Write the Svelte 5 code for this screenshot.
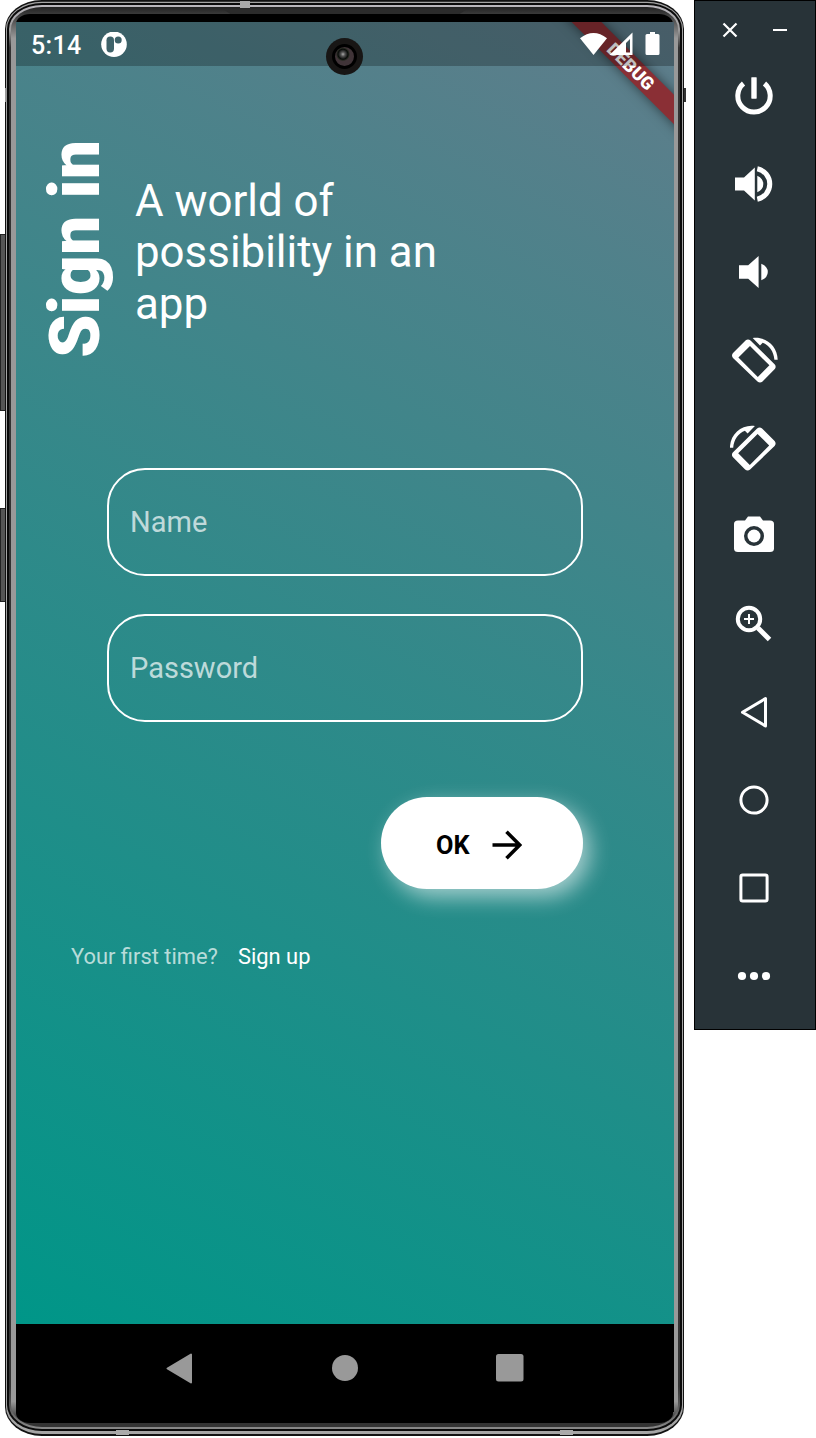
<script>
  const rail = ['power', 'volume-up', 'volume-down', 'rotate-left', 'rotate-right', 'camera', 'zoom', 'back', 'home', 'overview', 'more'];
  const fields = ['Name', 'Password'];
</script>

<main>
  <section class="device">
    <i class="key k1"></i><i class="key k2"></i>
    <svg class="bezel" width="679" height="1436" viewBox="0 0 679 1436">
      <defs>
        <linearGradient id="rim" x1="0" y1="0" x2="0" y2="1"><stop offset="0" stop-color="#bbb8be" /><stop offset=".018" stop-color="#999" /><stop offset=".03" stop-color="#333" /><stop offset=".97" stop-color="#333" /><stop offset="1" stop-color="#888" /></linearGradient>
        <linearGradient id="side" x1="0" y1="0" x2="0" y2="1"><stop offset="0" stop-color="#222" /><stop offset=".007" stop-color="#444" /><stop offset=".022" stop-color="#999" /><stop offset=".982" stop-color="#999" /><stop offset=".995" stop-color="#333" /></linearGradient>
      </defs>
      <rect width="679" height="1436" rx="37" ry="29" fill="#111" />
      <rect x="1" y="1.8" width="677" height="1432.2" rx="36" ry="27" fill="#a5a5a5" />
      <rect x="2" y="3" width="675" height="1428" rx="35" ry="26" fill="#0a0a0a" />
      <rect x="4" y="5" width="671" height="1424" rx="33" ry="24" fill="url(#rim)" />
      <rect x="6" y="7" width="667" height="1420" rx="31" ry="22" fill="url(#side)" />
      <rect x="11" y="14" width="657" height="1409" rx="14" ry="10" fill="#000" />
    </svg>
    <i class="band t1"></i><i class="band b1"></i><i class="band b2"></i>
    <i class="tick left"></i><i class="tick right"></i>
    <i class="speaker"></i>
    <div class="screen">
      <div class="app">
        <div class="corner"><div class="ribbon">DEBUG</div></div>
        <header class="status">
          <span class="clock">5:14</span>
          <svg class="badge" width="26" height="26" viewBox="0 0 26 26">
            <circle cx="13" cy="12.3" r="12.8" fill="#fff" />
            <rect x="5.5" y="4.5" width="7.5" height="16" rx="3.7" fill="#3e6269" />
            <circle cx="17.2" cy="8" r="3.5" fill="#3e6269" />
          </svg>
          <svg class="signals" width="80" height="26" viewBox="0 0 80 26">
            <path d="M0 6.2Q13.5-4.2 27 6.2L13.5 23Z" fill="#fff" />
            <path fill-rule="evenodd" d="M52.5.5V23H29.5ZM50 7L46 11V20.5H50Z" fill="#fff" />
            <path d="M67 2H70V0H75V2H78Q79.5 2 79.5 3.5V21.5Q79.5 23 78 23H67Q65.5 23 65.5 21.5V3.5Q65.5 2 67 2Z" fill="#fff" />
          </svg>
        </header>
        <div class="lens"><i></i></div>
        <div class="hero">
          <h1>Sign in</h1>
          <p>A world of possibility in an app</p>
        </div>
        <form>
          {#each fields as field}
            <div class="field">{field}</div>
          {/each}
          <button type="button">
            <span>OK</span>
            <svg width="30" height="30" viewBox="0 0 30 30"><path d="M.5 15H27M14.5 1.8L27.7 15L14.5 28.2" fill="none" stroke="#000" stroke-width="3.6" /></svg>
          </button>
        </form>
        <footer><span>Your first time?</span><b>Sign up</b></footer>
      </div>
      <nav>
        <svg width="27" height="31" viewBox="0 0 27 31"><path d="M1.5 15.5L25 1.5V29.5Z" fill="#999" stroke="#999" stroke-width="2" stroke-linejoin="round" /></svg>
        <svg width="26" height="26" viewBox="0 0 26 26"><circle cx="13" cy="13" r="13" fill="#999" /></svg>
        <svg width="28" height="28" viewBox="0 0 28 28"><rect width="27.5" height="27.5" rx="2.5" fill="#999" /></svg>
      </nav>
    </div>
  </section>

  <aside>
    <div class="window">
      <svg width="16" height="16" viewBox="0 0 16 16"><path d="M1.5 1.5L14.5 14.5M14.5 1.5L1.5 14.5" stroke="#fff" stroke-width="2.2" /></svg>
      <svg width="14" height="16" viewBox="0 0 14 16"><path d="M0 8H14" stroke="#fff" stroke-width="2" /></svg>
    </div>
    {#each rail as name}
      <div class="tool">
        <svg width="48" height="48" viewBox="-24 -24 48 48" fill="#fff">
          {#if name === 'power'}
            <rect x="-2.7" y="-18.8" width="5.4" height="21.5" rx=".6" />
            <path d="M-10.5-12.5A16.2 16.2 0 1 0 10.5-12.5" fill="none" stroke="#fff" stroke-width="5" />
          {:else if name === 'volume-up'}
            <path d="M-19-6.5H-10L.8-16.5V16.5L-10 6.5H-19ZM3.3-8.3Q9.3-5.5 9.3 0T3.3 8.3Z" />
            <path d="M3.3-15.2A15.5 15.5 0 0 1 3.3 15.2" fill="none" stroke="#fff" stroke-width="5" />
          {:else if name === 'volume-down'}
            <path d="M-15-6.8H-5.8L4.6-16V16L-5.8 6.8H-15ZM7.3-8.3Q13.8-5.5 13.8 0T7.3 8.3Z" />
          {:else if name === 'rotate-left' || name === 'rotate-right'}
            <g transform={name === 'rotate-right' ? 'translate(-.4 .5) scale(-1 1)' : 'translate(0 .5)'}>
              <path fill-rule="evenodd" d="M-8.5-20Q-6-21.8-3.5-20L20.8 4Q22.5 6 20.8 8.5L8.5 21Q6 23 3.5 21L-21-2.5Q-23-5-21-7.5ZM-4-14.6L-15.6-3L3.8 16.4L15.4 4.8Z" />
              <path d="M-1.3-22.5C12-24.3 23.4-14.5 23.7-.8H20.4C19.8-9 15-15.6 8.7-17.8L6-15Z" />
            </g>
          {:else if name === 'camera'}
            <path fill-rule="evenodd" d="M-16-15.5H-9L-6-19.5H6L9-15.5H16Q20-15.5 20-12V12.5Q20 16 16 16H-16Q-20 16-20 12.5V-12Q-20-15.5-16-15.5ZM0-10A10 10 0 1 0 0 10A10 10 0 1 0 0-10Z" />
            <circle r="6.5" />
          {:else if name === 'zoom'}
            <circle cx="-5" cy="-5" r="11.2" fill="none" stroke="#fff" stroke-width="4" />
            <path d="M4 4L15.5 15.5" stroke="#fff" stroke-width="5" />
            <path d="M-10-5H0M-5-10V0" stroke="#fff" stroke-width="2" />
          {:else if name === 'back'}
            <path d="M-11.5.3L11.5-13.5V14Z" fill="none" stroke="#fff" stroke-width="3" stroke-linejoin="round" />
          {:else if name === 'home'}
            <circle r="13.1" fill="none" stroke="#fff" stroke-width="3" />
          {:else if name === 'overview'}
            <rect x="-13.1" y="-13.1" width="26.2" height="26.2" rx="1.8" fill="none" stroke="#fff" stroke-width="3" />
          {:else}
            <circle cx="-12" r="4.1" /><circle r="4.1" /><circle cx="12" r="4.1" />
          {/if}
        </svg>
      </div>
    {/each}
  </aside>
</main>

<style>
  :global(body) { background: #fff; }
  * { box-sizing: border-box; }
  svg { display: block; flex: none; }
  main { width: 816px; height: 1438px; display: flex; align-items: flex-start; padding-left: 5px; overflow: hidden; font-family: Roboto, sans-serif; color: #fff; }
  .device { position: relative; flex: none; width: 679px; height: 1436px; padding: 22px 10px 24px 11px; }
  .bezel { position: absolute; left: 0; top: 0; }
  .key { position: absolute; left: -5px; width: 6px; background: #555; border: 1px solid #222; border-right-color: #888; }
  .k1 { top: 234px; height: 177px; }
  .k2 { top: 508px; height: 94px; }
  .band { position: absolute; z-index: 2; background: #aaa; }
  .t1 { left: 235px; top: 1px; width: 10px; height: 7px; }
  .b1 { left: 111px; bottom: 1px; width: 13px; height: 5px; }
  .b2 { left: 555px; bottom: 1px; width: 13px; height: 5px; }
  .tick { position: absolute; top: 88px; width: 2px; height: 14px; background: #333; }
  .tick.left { left: 0; background: #999; }
  .tick.right { right: -2px; }
  .speaker { position: absolute; z-index: 1; top: 9px; left: 218px; width: 244px; height: 5px; background: #2b2b2b; clip-path: polygon(0 0, 100% 0, 97% 100%, 3% 100%); }
  .screen { position: relative; width: 658px; height: 1390px; display: flex; flex-direction: column; background: #000; }
  .app { position: relative; height: 1302px; background: linear-gradient(206.8deg, #607d8b, #009688); overflow: hidden; }
  .status { position: relative; height: 44px; display: flex; align-items: center; padding: 1px 14px 0 15px; background: rgba(0, 0, 0, .25); }
  .clock { width: 70px; padding-top: 1px; font-size: 25px; font-weight: 500; letter-spacing: .3px; }
  .signals { margin-left: auto; }
  .corner { position: absolute; top: 0; right: 0; width: 130px; height: 130px; overflow: hidden; }
  .ribbon { position: absolute; width: 220px; height: 21px; left: -23px; top: 33.5px; transform: rotate(45deg); background: #8a2f35; box-shadow: 0 0 12px rgba(0, 0, 0, .5); text-align: center; font-size: 18px; line-height: 22px; font-weight: 900; letter-spacing: .1px; }
  .lens { position: absolute; left: 310px; top: 16px; width: 37px; height: 37px; border-radius: 50%; background: #181615; display: grid; place-items: center; }
  .lens i { width: 25px; height: 25px; border-radius: 50%; border: 3px solid #000; background: radial-gradient(circle at 42% 38%, #aaa 0, #555 2px, #080b09 5px, #24281f 6px, #403438 7px); }
  .hero { display: flex; align-items: flex-start; height: 402px; padding: 72px 0 0 21px; }
  h1 { margin: 0; width: 76px; height: 220px; writing-mode: vertical-rl; transform: rotate(180deg); font-size: 69.7px; line-height: 77px; font-weight: 900; white-space: nowrap; }
  p { margin: 37.5px 0 0 22px; width: 330px; font-size: 43.85px; line-height: 51.6px; }
  form { width: 476px; margin-left: 91px; display: flex; flex-direction: column; gap: 38.4px; }
  .field { height: 108px; border: 2px solid #fff; border-radius: 38px; padding: 0 21px; line-height: 105px; font-size: 29px; color: rgba(255, 255, 255, .7); }
  button { align-self: flex-end; margin-top: 36px; width: 202px; height: 92px; border: 0; border-radius: 46px; padding: 5px 6px 0 0; display: flex; align-items: center; justify-content: center; gap: 22.5px; background: #fff; color: #000; font: 700 25.3px Roboto, sans-serif; box-shadow: 7px 8px 21px rgba(255, 255, 255, .58); }
  footer { display: flex; gap: 20px; margin: 54px 0 0 55px; font-size: 21.9px; line-height: 27px; color: rgba(255, 255, 255, .7); }
  footer b { font-weight: 400; color: #fff; }
  nav { height: 88px; display: flex; align-items: center; justify-content: space-between; padding: 0 150px; }
  aside { flex: none; width: 122px; height: 1030px; margin-left: 10px; padding-right: 2px; border: 1px solid #000; background: #283338; }
  .window { height: 51px; padding: 6px 26px 0 27px; display: flex; align-items: center; justify-content: space-between; }
  .tool { height: 88px; display: grid; place-items: center; }
</style>
